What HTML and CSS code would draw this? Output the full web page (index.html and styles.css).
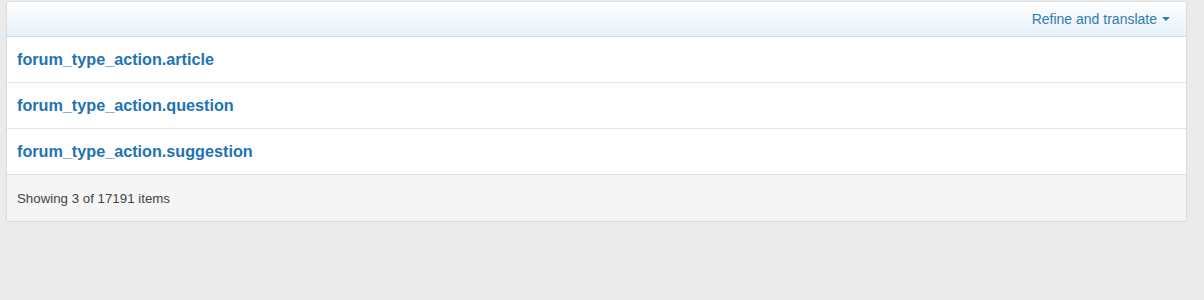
FILE: index.html
```html
<!DOCTYPE html>
<html lang="en">
<head>
<meta charset="utf-8"/>
<title>Forum types</title>
<link rel="stylesheet" href="styles.css">
</head>
<body>
<div class="panel">
  <div class="panel-head">
    <a class="refine" href="#">Refine and translate <span class="caret"></span></a>
  </div>
  <div class="row"><a href="#">forum_type_action.article</a></div>
  <div class="row"><a href="#">forum_type_action.question</a></div>
  <div class="row"><a href="#">forum_type_action.suggestion</a></div>
  <div class="panel-foot">Showing 3 of 17191 items</div>
</div>
</body>
</html>
```
FILE: styles.css
```css
body {
  font-family: "Liberation Sans", Arial, sans-serif;
  margin: 0;
  background: #ebebeb;
  color: #333;
}
.panel {
  margin: 1px 17px 0 6px;
  background: white;
  border: 1px solid #d9dde0;
  border-radius: 4px;
  box-shadow: 0 1px 2px rgba(0,0,0,0.06);
  overflow: hidden;
}
.panel-head {
  height: 34px;
  background: linear-gradient(to bottom, #ffffff, #e6f2fb);
  border-bottom: 1px solid #d3dce3;
  display: flex;
  align-items: center;
  justify-content: flex-end;
  padding: 0 16px;
}
.refine {
  color: #2f7bb1;
  font-size: 14px;
  text-decoration: none;
  display: flex;
  align-items: center;
  margin-top: -1px;
}
.caret {
  display: inline-block;
  margin-left: 5px;
  border-left: 4px solid transparent;
  border-right: 4px solid transparent;
  border-top: 4px solid #2f7bb1;
}
.row {
  height: 45px;
  display: flex;
  align-items: center;
  padding: 0 10px;
  border-bottom: 1px solid #e6e6e6;
}
.row a {
  color: #1f73b3;
  font-size: 16.2px;
  font-weight: bold;
  text-decoration: none;
}
.panel-foot {
  height: 46px;
  display: flex;
  align-items: center;
  padding: 0 10px;
  background: #f5f5f5;
  border-top: 1px solid #dcdcdc;
  margin-top: -1px;
  font-size: 13.3px;
  color: #444;
}
```
